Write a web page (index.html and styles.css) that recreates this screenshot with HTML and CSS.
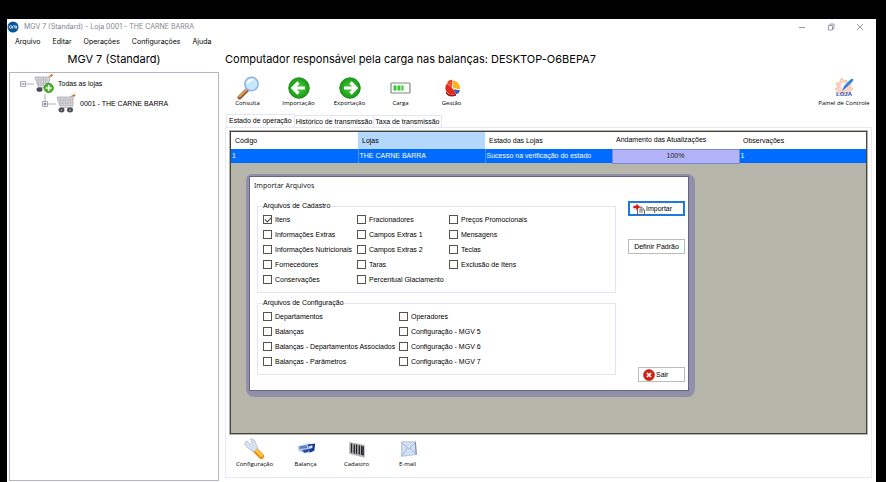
FILE: index.html
```html
<!DOCTYPE html>
<html lang="pt-BR">
<head>
<meta charset="utf-8">
<title>MGV 7 (Standard)</title>
<link rel="stylesheet" href="styles.css">
</head>
<body>
<div class="window">
  <header class="titlebar">
    <svg class="app-icon" viewBox="0 0 12 12"><circle cx="6" cy="6" r="5.500" fill="#0b5596"/><path d="M2.2 6a1.4 1.4 0 1 0 2.8 0a1.4 1.4 0 1 0-2.8 0M5.6 7.500V5.200l1.200-.5M8 4v3.500M9.600 4.800v2.700M7.300 6h2.500" stroke="#d5ecff" stroke-width=".9" fill="none"/></svg>
    <span class="app-title">MGV 7 (Standard) - Loja 0001 - THE CARNE BARRA</span>
    <div class="window-buttons">
      <button type="button" aria-label="Minimizar"><svg viewBox="0 0 8 8"><path d="M1 4.500h6" stroke="#8c8c98" stroke-width=".9"/></svg></button>
      <button type="button" aria-label="Restaurar"><svg viewBox="0 0 8 8"><path d="M1.500 2.500h4v4.500h-4zM3 2.500V1h4v4.500H5.500" stroke="#83839a" stroke-width=".8" fill="none"/></svg></button>
      <button type="button" aria-label="Fechar"><svg viewBox="0 0 8 8"><path d="M1 1l6 6M7 1L1 7" stroke="#83838f" stroke-width=".8"/></svg></button>
    </div>
  </header>
  <nav class="menubar">
    <button type="button">Arquivo</button>
    <button type="button">Editar</button>
    <button type="button">Operações</button>
    <button type="button">Configurações</button>
    <button type="button">Ajuda</button>
  </nav>
  <div class="workspace">
    <aside class="sidebar">
      <h1 class="heading sidebar-heading">MGV 7 (Standard)</h1>
      <div class="tree">
        <div class="tree-row">
          <svg class="tree-toggle" viewBox="0 0 14 20"><path d="M.5 7.500h5v5h-5z" fill="#fff" stroke="#a9a9b8"/><path d="M1.500 10h3" stroke="#667"/><path d="M6 10h8" stroke="#b0b0b8"/></svg>
          <svg class="tree-icon" viewBox="0 0 20 20"><path d="M1 4h13l3-3" fill="none" stroke="#aaa" stroke-width="1.200"/><path d="M16.500 2.500l2-2" stroke="#e07a1c" stroke-width="2"/><path d="M1 3h15l-1.500 9H4z" fill="#d8d8de" stroke="#a4a4ae" stroke-width=".7"/><path d="M2 6h13M3 9h12M4.500 3v9M7 3v9M9.500 3v9M12 3v9" stroke="#aaa" stroke-width=".5"/><path d="M4 13.500h9" stroke="#bbb"/><ellipse cx="5.500" cy="15.500" rx="3" ry="2.300" fill="#4c4c55"/><circle cx="14.700" cy="14" r="4.700" fill="#43b51d" stroke="#268711" stroke-width=".6"/><path d="M14.700 11v6M11.700 14h6" stroke="#fff" stroke-width="1.600"/></svg>
          <span>Todas as lojas</span>
        </div>
        <div class="tree-row tree-child">
          <svg class="tree-toggle" viewBox="0 0 14 20"><path d="M3 0v7" stroke="#b0b0b8"/><path d="M.5 7.500h5v5h-5z" fill="#fff" stroke="#a9a9b8"/><path d="M1.500 10h3M3 8.500v3" stroke="#667"/><path d="M6 10h8" stroke="#b0b0b8"/></svg>
          <svg class="tree-icon" viewBox="0 0 20 20"><path d="M1 4h13l3-3" fill="none" stroke="#aaa" stroke-width="1.200"/><path d="M17 2.500l2-2" stroke="#e07a1c" stroke-width="2"/><path d="M1 3h16v9H4z" fill="#d8d8de" stroke="#a4a4ae" stroke-width=".7"/><path d="M2 6h15M3 9h14M4.500 3v9M7 3v9M9.500 3v9M12 3v9M14.500 3v9" stroke="#aaa" stroke-width=".5"/><path d="M4 13.500h13" stroke="#bbb"/><ellipse cx="5.500" cy="16" rx="3" ry="2.400" fill="#4c4c55"/><ellipse cx="14" cy="16" rx="3" ry="2.400" fill="#4c4c55"/><circle cx="5.500" cy="16" r=".8" fill="#bbb"/><circle cx="14" cy="16" r=".8" fill="#bbb"/></svg>
          <span>0001 - THE CARNE BARRA</span>
        </div>
      </div>
    </aside>
    <main class="content">
      <h2 class="heading">Computador responsável pela carga nas balanças: DESKTOP-O6BEPA7</h2>
      <div class="toolbar">
        <button type="button" class="tool"><svg viewBox="0 0 24 24"><path d="M3.500 21.500l8-8" stroke="#8e5b32" stroke-width="4" stroke-linecap="round"/><path d="M3.500 20.500l7-7" stroke="#e0a25e" stroke-width="2" stroke-linecap="round"/><circle cx="15.500" cy="8" r="6.700" fill="#c8e6fc" stroke="#8fb4ea" stroke-width="1.600"/><path d="M11.500 7.500a4.500 4.500 0 0 1 6-3.500" stroke="#fff" stroke-width="2" fill="none"/></svg>Consulta</button>
        <button type="button" class="tool"><svg viewBox="0 0 24 24"><defs><radialGradient id="green"><stop offset="0" stop-color="#54cc45"/><stop offset="1" stop-color="#169c14"/></radialGradient></defs><circle cx="12" cy="12" r="10.300" fill="url(#green)" stroke="#168014" stroke-width=".8"/><path d="M11.500 6.500L6 12l5.500 5.500M6.500 12H18" fill="none" stroke="#fff" stroke-width="3.200"/></svg>Importação</button>
        <button type="button" class="tool"><svg viewBox="0 0 24 24"><circle cx="12" cy="12" r="10.300" fill="url(#green)" stroke="#168014" stroke-width=".8"/><path d="M12.500 6.500L18 12l-5.500 5.500M17.500 12H6" fill="none" stroke="#fff" stroke-width="3.200"/></svg>Exportação</button>
        <button type="button" class="tool"><svg viewBox="0 0 24 24"><path d="M3 7h17q1 0 1 1v8q0 1-1 1H3q-1 0-1-1V8q0-1 1-1z" fill="#fcfffa" stroke="#7d8b76" stroke-width="1.200"/><path d="M4.500 9.500h3v5h-3zM8.500 9.500h3v5h-3zM12.500 9.500h2v5h-2z" fill="#35c632"/></svg>Carga</button>
        <button type="button" class="tool"><svg viewBox="0 0 24 24"><path d="M12 12L7 7.500Q4 12 6.500 15.500Q11 20.500 16 17.500z" fill="#e6271b"/><path d="M12 12L7 7q2-4 5.500-3z" fill="#ee4a30"/><path d="M13 12V4.500q7 .5 7 9z" fill="#ffb619"/><path d="M13 13.300l7 1q-1 3.500-3.500 4z" fill="#3f5ab8"/><path d="M6 15.500q4 5 10 2.300v2q-7 2-10-2z" fill="#a31512"/></svg>Gestão</button>
        <button type="button" class="tool tool-panel"><svg viewBox="0 0 24 24"><path d="M10 2l2 3 3-1v3l4 0-1 4 3 2-3 2v3H6v-3l-3-2 3-2-2-4 4 0V4z" fill="#ffd4c2" stroke="#f2b29d" stroke-width=".7"/><circle cx="12" cy="10" r="3" fill="#fff"/><path d="M10 15l2-5 7-7q3-1 2 2l-7 7z" fill="#2e83e2"/><text x="12" y="20" class="logo-text">LOJA</text></svg>Painel de Controle</button>
      </div>
      <div class="tabs" role="tablist">
        <button type="button" role="tab" class="tab tab-active" aria-selected="true">Estado de operação</button>
        <button type="button" role="tab" class="tab">Histórico de transmissão</button>
        <button type="button" role="tab" class="tab">Taxa de transmissão</button>
      </div>
      <section class="tab-page">
        <div class="grid">
          <table>
            <thead>
              <tr><th>Código</th><th class="sorted">Lojas</th><th>Estado das Lojas</th><th>Andamento das Atualizações</th><th>Observações</th></tr>
            </thead>
            <tbody>
              <tr><td>1</td><td>THE CARNE BARRA</td><td>Sucesso na verificação do estado</td><td class="progress">100%</td><td>1</td></tr>
            </tbody>
          </table>
        </div>
        <div class="toolbar toolbar-bottom">
          <button type="button" class="tool"><svg viewBox="0 0 24 24"><path d="M11 12l8 8" stroke="#e88e0c" stroke-width="6" stroke-linecap="round"/><path d="M12 12l7 7" stroke="#ffc64e" stroke-width="3" stroke-linecap="round"/><path d="M3 3l4 4 2-2-2-4q5 0 6 5l2 5-4 4-5-3q-5-2-5-7z" fill="#d7e0f0" stroke="#a9b8d5" stroke-width=".8"/></svg>Configuração</button>
          <button type="button" class="tool"><svg viewBox="0 0 24 24"><path d="M3 9l12-3 7 1-1 7-10 3-7-3z" fill="#b5c6e8"/><path d="M14 7l8-1-1 8-5 2z" fill="#173b92"/><path d="M5 9l8-1v3l-8 1z" fill="#5e7fc4"/><path d="M8 13l7-1v3l-5 1z" fill="#234a9e"/><path d="M15 9l4-1v3l-4 1z" fill="#cfe4ff"/></svg>Balança</button>
          <button type="button" class="tool"><svg viewBox="0 0 24 24"><path d="M4 5l16 3v13L4 17z" fill="#bcbcc0" stroke="#999" stroke-width=".6"/><path d="M6 6v10M9 7v10M11.500 7v10.500M14.500 8v10M17 8.500v10M18.700 9v10" stroke="#24242a" stroke-width="1.500"/></svg>Cadastro</button>
          <button type="button" class="tool"><svg viewBox="0 0 24 24"><path d="M5 4h15l1 14-16 2z" fill="#d2dff0" stroke="#a5b6d2" stroke-width=".8"/><path d="M5 5l8 7 7-7M5 20l6-9M21 18l-7-7" stroke="#a1b3d3" fill="none"/><path d="M20 4l1 14" stroke="#6f8cd2" stroke-width="1.200"/></svg>E-mail</button>
        </div>
      </section>
    </main>
  </div>
</div>

<div class="dialog-frame">
  <form class="dialog" role="dialog" aria-labelledby="dialog-title">
    <h3 id="dialog-title" class="dialog-title">Importar Arquivos</h3>
    <div class="dialog-body">
      <div class="groups">
        <fieldset>
          <legend>Arquivos de Cadastro</legend>
          <div class="checks checks-three">
            <label><input type="checkbox" checked>Itens</label>
            <label><input type="checkbox">Informações Extras</label>
            <label><input type="checkbox">Informações Nutricionais</label>
            <label><input type="checkbox">Fornecedores</label>
            <label><input type="checkbox">Conservações</label>
            <label><input type="checkbox">Fracionadores</label>
            <label><input type="checkbox">Campos Extras 1</label>
            <label><input type="checkbox">Campos Extras 2</label>
            <label><input type="checkbox">Taras</label>
            <label><input type="checkbox">Percentual Glaciamento</label>
            <label><input type="checkbox">Preços Promocionais</label>
            <label><input type="checkbox">Mensagens</label>
            <label><input type="checkbox">Teclas</label>
            <label><input type="checkbox">Exclusão de Itens</label>
          </div>
        </fieldset>
        <fieldset>
          <legend>Arquivos de Configuração</legend>
          <div class="checks checks-two">
            <label><input type="checkbox">Departamentos</label>
            <label><input type="checkbox">Balanças</label>
            <label><input type="checkbox">Balanças - Departamentos Associados</label>
            <label><input type="checkbox">Balanças - Parâmetros</label>
            <label><input type="checkbox">Operadores</label>
            <label><input type="checkbox">Configuração - MGV 5</label>
            <label><input type="checkbox">Configuração - MGV 6</label>
            <label><input type="checkbox">Configuração - MGV 7</label>
          </div>
        </fieldset>
      </div>
      <div class="actions">
        <button type="button" class="action action-default"><svg viewBox="0 0 12 12"><path d="M4.500 4h4l3 3v4.500h-7z" fill="#fff" stroke="#444" stroke-width=".8"/><path d="M6 7h3M6 9h4M8 4v3h3" stroke="#555" stroke-width=".8" fill="none"/><path d="M.3 2.700h3V.5L7 4 3.300 7.500V5.300h-3z" fill="#d8181c"/></svg>Importar</button>
        <button type="button" class="action">Definir Padrão</button>
        <button type="button" class="action action-exit"><svg viewBox="0 0 12 12"><circle cx="6" cy="6" r="5.500" fill="#d32715" stroke="#a11a10" stroke-width=".6"/><path d="M4 4l4 4M8 4L4 8" stroke="#fff" stroke-width="1.700"/></svg>Sair</button>
      </div>
    </div>
  </form>
</div>
</body>
</html>
```
FILE: styles.css
```css
* {
  box-sizing: border-box;
}

body {
  margin: 0;
  min-height: 100vh;
  display: flex;
  padding: 19px 10px 0 7px;
  background: #000;
  color: #000;
  font: 7px/10px "Liberation Sans", Arial, sans-serif;
}

button {
  padding: 0;
  border: 0;
  background: none;
  color: inherit;
  font: inherit;
  white-space: nowrap;
}

svg {
  display: block;
  flex: none;
}

.window {
  flex: 1;
  display: flex;
  flex-direction: column;
  background: #fff;
}

.titlebar {
  display: flex;
  align-items: center;
  height: 15px;
  padding-right: 12px;
  color: #85858f;
  font: 7px/12px Inter, sans-serif;
}

.app-icon {
  width: 12px;
  height: 12px;
  margin-right: 5px;
}

.window-buttons {
  display: flex;
  gap: 21px;
  margin-left: auto;
}

.window-buttons svg {
  width: 8px;
  height: 8px;
}

.menubar {
  display: flex;
  gap: 12px;
  height: 15px;
  padding-left: 8px;
  font: 7px/15px Inter, sans-serif;
}

.workspace {
  flex: 1;
  display: flex;
  gap: 6px;
  padding: 0 4px 1px 2px;
}

.heading {
  height: 23px;
  margin: 0;
  color: #000;
  font: 11px/21px Inter, sans-serif;
}

.sidebar {
  width: 210px;
  display: flex;
  flex-direction: column;
}

.sidebar-heading {
  text-align: center;
}

.tree {
  flex: 1;
  padding: 1px 10px;
  border: 1px solid #b4b4c4;
}

.tree-row {
  display: flex;
  align-items: center;
  height: 20px;
}

.tree-child {
  padding-left: 22px;
}

.tree-toggle {
  width: 14px;
  height: 20px;
}

.tree-icon {
  width: 20px;
  height: 20px;
  margin-right: 4px;
}

.content {
  flex: 1;
  min-width: 0;
  display: flex;
  flex-direction: column;
}

.toolbar {
  display: flex;
  height: 42px;
  padding-top: 4px;
  margin: 0 -2px 0 -3px;
}

.tool {
  width: 51px;
  height: 30px;
  display: flex;
  flex-direction: column;
  align-items: center;
  font: 6px/6px "Open Sans", sans-serif;
}

.tool svg {
  width: 24px;
  height: 24px;
}

.tool-panel {
  width: 60px;
  margin-left: auto;
}

.logo-text {
  font: bold 6px "Liberation Sans", Arial, sans-serif;
  fill: #1458c6;
  text-anchor: middle;
}

.tabs {
  display: flex;
  align-items: flex-end;
  height: 13px;
  padding-left: 1px;
}

.tab {
  height: 12px;
  padding: 0 1px;
  border: 1px solid #e4e4f4;
  border-width: 1px 1px 0 0;
}

.tab-active {
  height: 13px;
  padding: 0 2px;
  border-left-width: 1px;
}

.tab-page {
  flex: 1;
  display: flex;
  flex-direction: column;
  margin-bottom: 3px;
  padding: 3px 4px 0;
  border: 1px solid #e8e8f8;
}

.grid {
  flex: 1;
  border: 1px solid #44443e;
  outline: 1px solid #b4b4ac;
  background: #b6b6aa;
}

table {
  width: 100%;
  border-collapse: collapse;
  table-layout: fixed;
}

th {
  height: 17px;
  padding: 0 4px;
  background: #fff;
  font-weight: normal;
  text-align: left;
}

.sorted {
  background: #b4d8fd;
}

td {
  height: 14px;
  padding: 0 1px;
  border-left: 1px solid #4b91f0;
  background: #006cff;
  color: #fff;
}

td:first-child {
  border-left: 0;
}

.progress {
  border: 1px solid #7487dc;
  background: #b3b3f7;
  color: #222;
  text-align: center;
}

.toolbar-bottom {
  height: 43px;
  margin: 0 0 0 -1px;
}

.toolbar-bottom .tool {
  line-height: 8px;
}

.toolbar-bottom svg {
  width: 22px;
  height: 22px;
}

.dialog-frame {
  position: absolute;
  left: 246px;
  top: 174px;
  padding: 2px 6px 6px 3px;
  border-radius: 6px 8px 8px 8px;
  background: #9090aa;
}

.dialog {
  width: 440px;
  padding: 0 3px 8px 4px;
  border: 1px solid #646484;
  background: #fff;
}

.dialog-title {
  margin: 0;
  padding-bottom: 6px;
  color: #222;
  font: 7px/18px "Noto Sans", sans-serif;
}

.dialog-body {
  display: flex;
  justify-content: space-between;
  padding-left: 3px;
}

.groups {
  width: 359px;
  display: flex;
  flex-direction: column;
  gap: 5px;
  margin-bottom: 7px;
}

fieldset {
  min-width: 0;
  margin: 0;
  padding: 1px 4px 5px 5px;
  border: 1px solid #e4e4f6;
}

legend {
  padding: 0;
}

.checks {
  display: grid;
  grid-auto-flow: column;
}

.checks-three {
  grid-template: repeat(5, 15px) / 94px 92px 1fr;
}

.checks-two {
  grid-template: repeat(4, 15px) / 136px 1fr;
}

label {
  display: flex;
  align-items: center;
  gap: 3px;
  white-space: nowrap;
}

input {
  appearance: none;
  flex: none;
  display: grid;
  place-items: center;
  width: 9px;
  height: 9px;
  margin: 0;
  border: 1px solid #55554a;
  background: #fff;
}

input:checked::before {
  content: "";
  width: 5px;
  height: 3px;
  margin-bottom: 1px;
  border: solid #444;
  border-width: 0 0 1px 1px;
  transform: rotate(-45deg);
}

.actions {
  width: 57px;
  display: flex;
  flex-direction: column;
  align-items: flex-end;
}

.action {
  display: flex;
  align-items: center;
  justify-content: center;
  gap: 1px;
  width: 57px;
  height: 15px;
  margin-bottom: 23px;
  border: 1px solid #bdbdb8;
}

.action svg {
  width: 12px;
  height: 12px;
}

.action-default {
  justify-content: flex-start;
  padding-left: 3px;
  border: 2px solid #1f78dc;
}

.action-exit {
  justify-content: flex-start;
  width: 47px;
  margin: auto 0 0;
  padding-left: 4px;
}
```
